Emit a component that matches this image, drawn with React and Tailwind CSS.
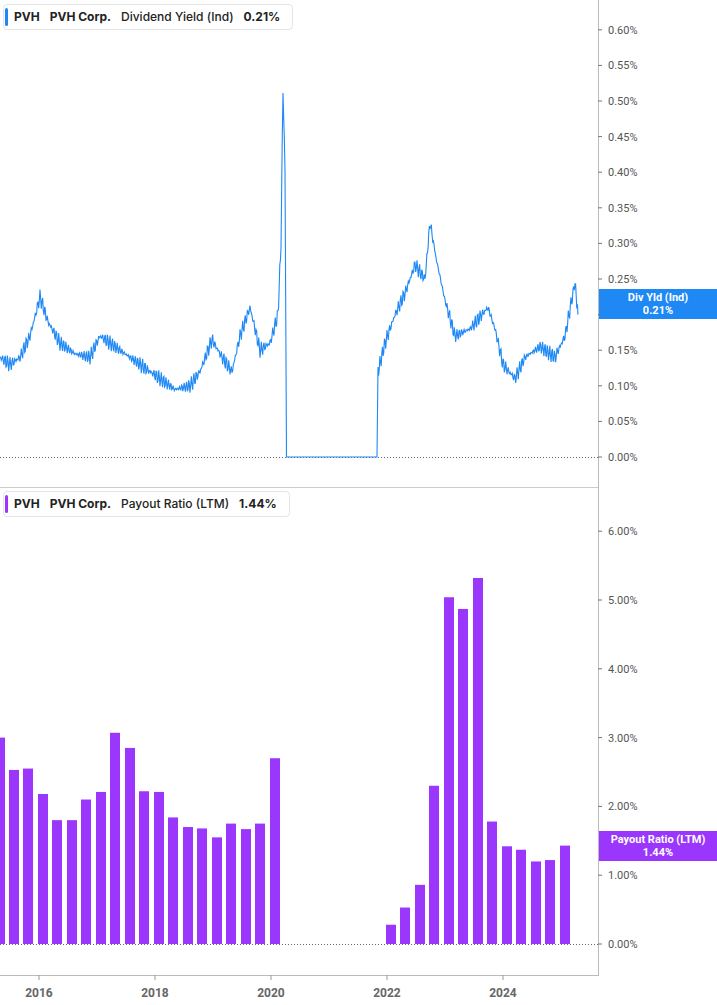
import React from "react";

const keys = [[0,0.14],[10,0.13],[20,0.14],[30,0.17],[40,0.225],[48,0.19],[60,0.16],[75,0.145],[90,0.14],[100,0.17],[110,0.16],[125,0.145],[140,0.13],[160,0.11],[175,0.095],[190,0.10],[200,0.12],[212,0.165],[222,0.14],[232,0.12],[240,0.17],[250,0.21],[260,0.15],[270,0.16],[278,0.20],[281,0.30],[283,0.52],[285,0.40],[286.5,0.0],[377,0.0],[378,0.12],[385,0.16],[395,0.20],[405,0.23],[415,0.27],[425,0.25],[430,0.33],[436,0.28],[445,0.22],[455,0.17],[470,0.18],[488,0.21],[495,0.18],[503,0.13],[515,0.11],[525,0.14],[540,0.155],[555,0.14],[565,0.17],[575,0.245],[578,0.20]];
function linePts(){
  const out=[];
  for(let i=0;i<keys.length-1;i++){
    const [x0,v0]=keys[i],[x1,v1]=keys[i+1];
    const flat = v0===0&&v1===0;
    const steps=Math.max(1,Math.round((x1-x0)*1.5));
    for(let s=0;s<steps;s++){
      const x=x0+(x1-x0)*s/steps;
      let v=v0+(v1-v0)*s/steps;
      if(!flat && v>0.05) v+=Math.sin(x*2.7)*0.006+Math.sin(x*7.1)*0.005;
      out.push(`${x.toFixed(1)},${(457-v*712).toFixed(1)}`);
    }
  }
  out.push(`578,${457-0.2*712}`);
  return out.join(" ");
}
const bars=[[0,3.0],[14,2.53],[28,2.55],[43,2.18],[57,1.80],[72,1.80],[86,2.10],[101,2.21],[115,3.07],[130,2.85],[144,2.22],[159,2.21],[173,1.84],[188,1.70],[202,1.68],[217,1.55],[231,1.75],[246,1.67],[260,1.75],[275,2.70],[391,0.28],[405,0.53],[420,0.86],[434,2.30],[449,5.04],[463,4.87],[478,5.32],[492,1.78],[507,1.42],[521,1.37],[536,1.20],[550,1.22],[565,1.43]];
const topTicks=[0.6,0.55,0.5,0.45,0.4,0.35,0.3,0.25,0.2,0.15,0.1,0.05,0];
const botTicks=[6,5,4,3,2,1,0];
const years=[[39,"2016"],[155,"2018"],[271,"2020"],[387,"2022"],[503,"2024"]];
const F={fontFamily:"Roboto, 'Liberation Sans', sans-serif"};

export default function App(){
  return (
    <div className="relative w-[717px] h-[1005px] bg-white overflow-hidden" style={F}>
      <svg width="717" height="1005" className="absolute inset-0">
        <line x1="598.5" y1="0" x2="598.5" y2="975" stroke="#bbb"/>
        <line x1="0" y1="487.5" x2="598" y2="487.5" stroke="#ccc"/>
        <line x1="0" y1="975.5" x2="599" y2="975.5" stroke="#bbb"/>
        <line x1="0" y1="457.5" x2="598" y2="457.5" stroke="#666" strokeDasharray="1 2"/>
        <line x1="0" y1="944.5" x2="598" y2="944.5" stroke="#666" strokeDasharray="1 2"/>
        {topTicks.map(t=>{const y=457-t*712;return <g key={t}><line x1="598" x2="602" y1={y} y2={y} stroke="#777"/><text x="608" y={y+4} fontSize="11" fill="#555">{t.toFixed(2)}%</text></g>})}
        {botTicks.map(t=>{const y=944-t*68.8;return <g key={t}><line x1="598" x2="602" y1={y} y2={y} stroke="#777"/><text x="608" y={y+4} fontSize="11" fill="#555">{t.toFixed(2)}%</text></g>})}
        {years.map(([x,l])=><g key={l}><line x1={x} x2={x} y1="975" y2="980" stroke="#999"/><text x={x} y="997" fontSize="12" fontWeight="bold" fill="#666" textAnchor="middle">{l}</text></g>)}
        <polyline points={linePts()} fill="none" stroke="#1e88f5" strokeWidth="1.1"/>
        {bars.map(([x,v])=><rect key={x} x={x-5} y={944-v*68.8} width="10" height={v*68.8} fill="#9b36fc"/>)}
      </svg>
      <div className="absolute left-[3px] top-[4px] h-[26px] flex items-center gap-[10px] pl-[10px] pr-[12px] border border-[#e5e5e5] rounded bg-white text-[12px] font-bold text-[#222]" style={{fontFamily:"Inter, sans-serif"}}>
        <span className="absolute left-[1px] top-[3px] bottom-[3px] w-[3px] rounded bg-[#1e88f5]"/>
        <span>PVH</span><span>PVH Corp.</span><span className="font-medium">Dividend Yield (Ind)</span><span>0.21%</span>
      </div>
      <div className="absolute left-[3px] top-[491px] h-[26px] flex items-center gap-[10px] pl-[10px] pr-[12px] border border-[#e5e5e5] rounded bg-white text-[12px] font-bold text-[#222]" style={{fontFamily:"Inter, sans-serif"}}>
        <span className="absolute left-[1px] top-[3px] bottom-[3px] w-[3px] rounded bg-[#9b36fc]"/>
        <span>PVH</span><span>PVH Corp.</span><span className="font-medium">Payout Ratio (LTM)</span><span>1.44%</span>
      </div>
      <div className="absolute left-[599px] top-[289px] w-[118px] h-[30px] bg-[#1e88f5] text-white text-[11px] font-bold leading-[13px] flex flex-col items-center justify-center">
        <span>Div Yld (Ind)</span><span>0.21%</span>
      </div>
      <div className="absolute left-[599px] top-[831px] w-[118px] h-[30px] bg-[#9b36fc] text-white text-[11px] font-bold leading-[13px] flex flex-col items-center justify-center">
        <span>Payout Ratio (LTM)</span><span>1.44%</span>
      </div>
    </div>
  );
}
